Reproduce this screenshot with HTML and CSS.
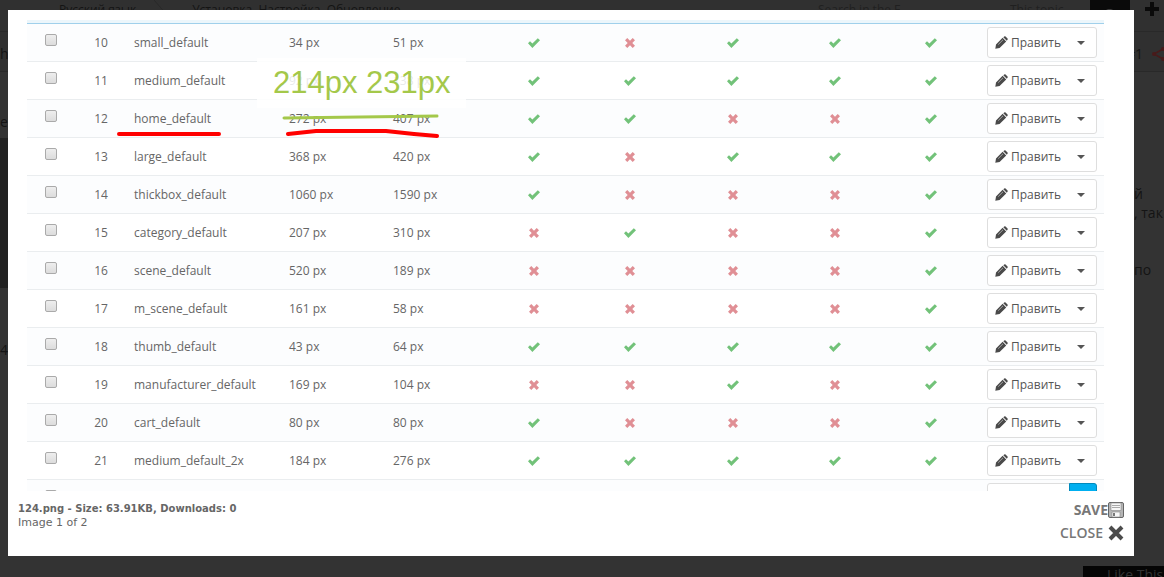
FILE: index.html
```html
<!DOCTYPE html>
<html lang="ru">
<head>
    <meta charset="UTF-8">
    <meta name="viewport" content="width=device-width, initial-scale=1.0">
    <title>124.png</title>
    <link rel="stylesheet" href="styles.css">
</head>
<body>
    <svg class="sprite" aria-hidden="true">
        <symbol id="yes" viewBox="0 0 14 12"><path d="M1 6.2 3 4.2 5.4 6.5 10.8 1.2 13 3.3 5.4 11Z"/></symbol>
        <symbol id="no" viewBox="0 0 12 12"><path d="M3.3 1 6 3.7 8.7 1 11 3.3 8.3 6 11 8.7 8.7 11 6 8.3 3.3 11 1 8.7 3.7 6 1 3.3Z"/></symbol>
        <symbol id="pencil" viewBox="0 0 13 13"><path d="M1 8.4 7.6 1.800 11.200 5.4 4.600 12 .3 12.7ZM8.3 1.2 9.2.4Q9.9-.1 10.6.5L12.5 2.4Q13.1 3.1 12.5 3.8L11.8 4.700Z"/><path d="M3.200 8.6 8 3.800" fill="none" stroke="#fff" stroke-width=".5"/></symbol>
        <symbol id="caret" viewBox="0 0 8 4"><path d="M0 0H8L4 4Z"/></symbol>
    </svg>

    <div class="page">
        <nav class="topbar">
            <a class="crumb" href="#">Русский язык</a>
            <svg class="sep" viewBox="0 0 14 31"><path d="M0 0 13 15 0 31" fill="none" stroke="#292929"/></svg>
            <a class="crumb" href="#">Установка, Настройка, Обновление</a>
            <span class="hint">Search in the F...</span>
            <span class="scope">This topic</span>
            <button class="search" type="button" aria-label="Search"><svg viewBox="0 0 16 16" width="16" height="16"><path d="M11 11 15 15M7.500 2a5 5 0 1 0 .1 0" fill="none" stroke="#444" stroke-width="2"/></svg></button>
            <svg class="plus" viewBox="0 0 14 14"><path d="M5 0H9V5H14V9H9V14H5V9H0V5H5Z"/></svg>
        </nav>
        <div class="postbar">
            <span>h</span>
            <a class="number" href="#">#1</a>
            <svg class="share" viewBox="0 0 14 14"><path d="M11 2 2 7 11 12" fill="none" stroke="#481a1a" stroke-width="1.5"/><g fill="#481a1a"><circle cx="2" cy="7" r="2"/><circle cx="11" cy="2" r="2"/><circle cx="11" cy="12" r="2"/></g></svg>
        </div>
        <div class="post">
            <div class="author">
                <p>es</p>
                <div class="avatar"></div>
                <p>4</p>
            </div>
            <div class="message">
                <p>й<br>, так</p>
                <p>по</p>
            </div>
        </div>
        <button class="like" type="button">Like This</button>
    </div>

    <main class="lightbox">
        <div class="picture">
            <table class="sizes">
                <colgroup>
                    <col class="c-check"><col class="c-id"><col class="c-name"><col class="c-width"><col class="c-height">
                    <col class="c-flag"><col class="c-flag"><col class="c-flag-wide"><col class="c-flag"><col class="c-flag"><col class="c-action">
                </colgroup>
                <tbody>
                    <tr>
                        <td><input type="checkbox" aria-label="small_default"></td><td>10</td><td>small_default</td><td>34 px</td><td>51 px</td>
                        <td><svg class="yes"><use href="#yes"/></svg></td><td><svg class="no"><use href="#no"/></svg></td><td><svg class="yes"><use href="#yes"/></svg></td><td><svg class="yes"><use href="#yes"/></svg></td><td><svg class="yes"><use href="#yes"/></svg></td>
                        <td><div class="group"><button type="button" class="edit"><svg><use href="#pencil"/></svg>Править</button><button type="button" class="more" aria-label="Ещё"><svg><use href="#caret"/></svg></button></div></td>
                    </tr>
                    <tr>
                        <td><input type="checkbox" aria-label="medium_default"></td><td>11</td><td>medium_default</td><td>92 px</td><td>138 px</td>
                        <td><svg class="yes"><use href="#yes"/></svg></td><td><svg class="yes"><use href="#yes"/></svg></td><td><svg class="yes"><use href="#yes"/></svg></td><td><svg class="yes"><use href="#yes"/></svg></td><td><svg class="yes"><use href="#yes"/></svg></td>
                        <td><div class="group"><button type="button" class="edit"><svg><use href="#pencil"/></svg>Править</button><button type="button" class="more" aria-label="Ещё"><svg><use href="#caret"/></svg></button></div></td>
                    </tr>
                    <tr>
                        <td><input type="checkbox" aria-label="home_default"></td><td>12</td><td>home_default</td><td>272 px</td><td>407 px</td>
                        <td><svg class="yes"><use href="#yes"/></svg></td><td><svg class="yes"><use href="#yes"/></svg></td><td><svg class="no"><use href="#no"/></svg></td><td><svg class="no"><use href="#no"/></svg></td><td><svg class="yes"><use href="#yes"/></svg></td>
                        <td><div class="group"><button type="button" class="edit"><svg><use href="#pencil"/></svg>Править</button><button type="button" class="more" aria-label="Ещё"><svg><use href="#caret"/></svg></button></div></td>
                    </tr>
                    <tr>
                        <td><input type="checkbox" aria-label="large_default"></td><td>13</td><td>large_default</td><td>368 px</td><td>420 px</td>
                        <td><svg class="yes"><use href="#yes"/></svg></td><td><svg class="no"><use href="#no"/></svg></td><td><svg class="yes"><use href="#yes"/></svg></td><td><svg class="yes"><use href="#yes"/></svg></td><td><svg class="yes"><use href="#yes"/></svg></td>
                        <td><div class="group"><button type="button" class="edit"><svg><use href="#pencil"/></svg>Править</button><button type="button" class="more" aria-label="Ещё"><svg><use href="#caret"/></svg></button></div></td>
                    </tr>
                    <tr>
                        <td><input type="checkbox" aria-label="thickbox_default"></td><td>14</td><td>thickbox_default</td><td>1060 px</td><td>1590 px</td>
                        <td><svg class="yes"><use href="#yes"/></svg></td><td><svg class="no"><use href="#no"/></svg></td><td><svg class="no"><use href="#no"/></svg></td><td><svg class="no"><use href="#no"/></svg></td><td><svg class="yes"><use href="#yes"/></svg></td>
                        <td><div class="group"><button type="button" class="edit"><svg><use href="#pencil"/></svg>Править</button><button type="button" class="more" aria-label="Ещё"><svg><use href="#caret"/></svg></button></div></td>
                    </tr>
                    <tr>
                        <td><input type="checkbox" aria-label="category_default"></td><td>15</td><td>category_default</td><td>207 px</td><td>310 px</td>
                        <td><svg class="no"><use href="#no"/></svg></td><td><svg class="yes"><use href="#yes"/></svg></td><td><svg class="no"><use href="#no"/></svg></td><td><svg class="no"><use href="#no"/></svg></td><td><svg class="yes"><use href="#yes"/></svg></td>
                        <td><div class="group"><button type="button" class="edit"><svg><use href="#pencil"/></svg>Править</button><button type="button" class="more" aria-label="Ещё"><svg><use href="#caret"/></svg></button></div></td>
                    </tr>
                    <tr>
                        <td><input type="checkbox" aria-label="scene_default"></td><td>16</td><td>scene_default</td><td>520 px</td><td>189 px</td>
                        <td><svg class="no"><use href="#no"/></svg></td><td><svg class="no"><use href="#no"/></svg></td><td><svg class="no"><use href="#no"/></svg></td><td><svg class="no"><use href="#no"/></svg></td><td><svg class="yes"><use href="#yes"/></svg></td>
                        <td><div class="group"><button type="button" class="edit"><svg><use href="#pencil"/></svg>Править</button><button type="button" class="more" aria-label="Ещё"><svg><use href="#caret"/></svg></button></div></td>
                    </tr>
                    <tr>
                        <td><input type="checkbox" aria-label="m_scene_default"></td><td>17</td><td>m_scene_default</td><td>161 px</td><td>58 px</td>
                        <td><svg class="no"><use href="#no"/></svg></td><td><svg class="no"><use href="#no"/></svg></td><td><svg class="no"><use href="#no"/></svg></td><td><svg class="no"><use href="#no"/></svg></td><td><svg class="yes"><use href="#yes"/></svg></td>
                        <td><div class="group"><button type="button" class="edit"><svg><use href="#pencil"/></svg>Править</button><button type="button" class="more" aria-label="Ещё"><svg><use href="#caret"/></svg></button></div></td>
                    </tr>
                    <tr>
                        <td><input type="checkbox" aria-label="thumb_default"></td><td>18</td><td>thumb_default</td><td>43 px</td><td>64 px</td>
                        <td><svg class="yes"><use href="#yes"/></svg></td><td><svg class="yes"><use href="#yes"/></svg></td><td><svg class="yes"><use href="#yes"/></svg></td><td><svg class="yes"><use href="#yes"/></svg></td><td><svg class="yes"><use href="#yes"/></svg></td>
                        <td><div class="group"><button type="button" class="edit"><svg><use href="#pencil"/></svg>Править</button><button type="button" class="more" aria-label="Ещё"><svg><use href="#caret"/></svg></button></div></td>
                    </tr>
                    <tr>
                        <td><input type="checkbox" aria-label="manufacturer_default"></td><td>19</td><td>manufacturer_default</td><td>169 px</td><td>104 px</td>
                        <td><svg class="no"><use href="#no"/></svg></td><td><svg class="no"><use href="#no"/></svg></td><td><svg class="yes"><use href="#yes"/></svg></td><td><svg class="no"><use href="#no"/></svg></td><td><svg class="yes"><use href="#yes"/></svg></td>
                        <td><div class="group"><button type="button" class="edit"><svg><use href="#pencil"/></svg>Править</button><button type="button" class="more" aria-label="Ещё"><svg><use href="#caret"/></svg></button></div></td>
                    </tr>
                    <tr>
                        <td><input type="checkbox" aria-label="cart_default"></td><td>20</td><td>cart_default</td><td>80 px</td><td>80 px</td>
                        <td><svg class="yes"><use href="#yes"/></svg></td><td><svg class="no"><use href="#no"/></svg></td><td><svg class="no"><use href="#no"/></svg></td><td><svg class="no"><use href="#no"/></svg></td><td><svg class="yes"><use href="#yes"/></svg></td>
                        <td><div class="group"><button type="button" class="edit"><svg><use href="#pencil"/></svg>Править</button><button type="button" class="more" aria-label="Ещё"><svg><use href="#caret"/></svg></button></div></td>
                    </tr>
                    <tr>
                        <td><input type="checkbox" aria-label="medium_default_2x"></td><td>21</td><td>medium_default_2x</td><td>184 px</td><td>276 px</td>
                        <td><svg class="yes"><use href="#yes"/></svg></td><td><svg class="yes"><use href="#yes"/></svg></td><td><svg class="yes"><use href="#yes"/></svg></td><td><svg class="yes"><use href="#yes"/></svg></td><td><svg class="yes"><use href="#yes"/></svg></td>
                        <td><div class="group"><button type="button" class="edit"><svg><use href="#pencil"/></svg>Править</button><button type="button" class="more" aria-label="Ещё"><svg><use href="#caret"/></svg></button></div></td>
                    </tr>
                    <tr class="hovered">
                        <td><input type="checkbox" aria-label="next"></td><td></td><td></td><td></td><td></td><td></td><td></td><td></td><td></td><td></td>
                        <td><div class="group"><button type="button" class="edit" aria-label="Править"></button><button type="button" class="more active" aria-label="Ещё"></button></div></td>
                    </tr>
                </tbody>
            </table>
            <!-- hand-drawn marks over the table -->
            <div class="note">214px 231px</div>
            <svg class="marks" viewBox="0 0 340 40" fill="none" stroke-linecap="round" stroke-linejoin="round">
                <path d="M176 8 329 6" stroke="#a4c84a" stroke-width="3"/>
                <path d="M11 24H111M180 24 208 21H278L306 24 329 26" stroke="#f00" stroke-width="4"/>
            </svg>
        </div>
        <div class="details">
            <div class="caption">
                <strong>124.png - Size: 63.91KB, Downloads: 0</strong>
                <span>Image 1 of 2</span>
            </div>
            <div class="actions">
                <a class="save" href="#">SAVE
                    <svg viewBox="0 0 16 16"><path d="M.5 2Q.5.5 2 .5H14Q15.5.5 15.5 2V14Q15.5 15.5 14 15.5H2Q.5 15.5.5 14Z" fill="#b5b5b5" stroke="#666"/><path d="M3 1H13V8.500H3ZM4 10H12V15H4Z" fill="#f7f7f7" stroke="#888" stroke-width=".6"/><path d="M4 3.500H12M4 5.500H12" stroke="#aaa"/><path d="M5 11H7V14H5Z" fill="#777"/></svg>
                </a>
                <a class="close" href="#">CLOSE
                    <svg viewBox="0 0 16 16"><path d="M2 2 14 14M14 2 2 14" stroke="#4c4c4c" stroke-width="4"/></svg>
                </a>
            </div>
        </div>
    </main>
</body>
</html>
```

FILE: styles.css
```css
* {
    box-sizing: border-box;
}
body {
    margin: 0;
    background-color: #333;
    font-family: "Open Sans", sans-serif;
}
a {
    color: inherit;
    text-decoration: none;
}
button {
    font-family: inherit;
    cursor: pointer;
}
p {
    margin: 0;
}
.sprite {
    display: none;
}

/* dimmed forum page */
.page {
    display: flex;
    flex-direction: column;
    height: 100vh;
    overflow: hidden;
    color: #141414;
    font-size: 14px;
}
.topbar {
    display: flex;
    height: 32px;
    padding-left: 59px;
    background-color: #303030;
    border-bottom: 1px solid #292929;
    font-size: 12px;
    line-height: 20px;
}
.sep {
    width: 14px;
    height: 31px;
    margin: 0 24px 0 18px;
}
.hint {
    width: 192px;
    margin-left: auto;
    color: #202020;
}
.scope {
    width: 80px;
    color: #202020;
}
.search {
    width: 40px;
    padding: 3px 0;
    background-color: #0a0a0a;
    border: none;
    line-height: 0;
}
.search svg {
    display: block;
    margin: 0 auto auto;
}
.plus {
    width: 14px;
    height: 14px;
    margin: 2px 5px 0 15px;
    fill: #0a0a0a;
}
.postbar {
    display: flex;
    align-items: center;
    height: 40px;
    padding-top: 4px;
    background-color: #303030;
    border-bottom: 1px solid #292929;
}
.number {
    margin-left: auto;
}
.share {
    width: 14px;
    height: 14px;
    margin: 0 -2px 0 9px;
}
.post {
    display: flex;
    justify-content: space-between;
}
.author {
    padding-top: 40px;
    line-height: 20px;
}
.avatar {
    width: 60px;
    height: 150px;
    margin: 6px 0 52px;
    background-color: #222;
}
.message {
    width: 30px;
    padding-top: 112px;
    line-height: 19px;
    white-space: nowrap;
}
.message p {
    margin-bottom: 38px;
}
.like {
    align-self: flex-end;
    flex: none;
    width: 81px;
    height: 11px;
    margin-top: auto;
    padding: 0 0 0 24px;
    overflow: hidden;
    background-color: #050505;
    border: none;
    color: #333;
    font-size: 14px;
    line-height: 17px;
    text-align: left;
    white-space: nowrap;
}

/* lightbox */
.lightbox {
    position: absolute;
    top: 10px;
    right: 30px;
    left: 8px;
    padding: 10px 10px 13px;
    background-color: #fff;
}
.picture {
    position: relative;
    height: 471px;
    margin: 0 20px 0 9px;
    overflow: hidden;
    border-top: 3px solid #ecf6fb;
}
.sizes {
    width: 100%;
    table-layout: fixed;
    border-collapse: separate;
    border-spacing: 0;
    border-top: 1px solid #a0d0eb;
    color: #666;
    font-size: 12px;
}
.c-check { width: 47px; }
.c-id { width: 54px; }
.c-name { width: 155px; }
.c-width { width: 104px; }
.c-height { width: 99px; }
.c-flag { width: 96px; }
.c-flag-wide { width: 109px; }
.sizes td {
    height: 38px;
    padding: 0 6px;
    border-bottom: 1px solid #eaedef;
    white-space: nowrap;
}
.sizes tr:nth-child(odd) {
    background-color: #fcfdfe;
}
.sizes .hovered {
    background-color: #f3f7fa;
}
.sizes td:nth-child(1),
.sizes td:nth-child(2),
.sizes td:nth-child(n+6) {
    text-align: center;
}
.sizes td:nth-child(n+6) {
    padding: 0;
}
.sizes input {
    appearance: none;
    display: block;
    width: 12px;
    height: 12px;
    margin: 0 auto 5px;
    background: linear-gradient(#eee, #dcdcdc);
    border: 1px solid #aaa;
    border-radius: 2px;
}
.yes {
    display: block;
    width: 14px;
    height: 12px;
    margin: 0 auto;
    fill: #72c279;
}
.no {
    display: block;
    width: 12px;
    height: 12px;
    margin: 0 auto;
    fill: #e08f95;
}
.group {
    display: flex;
    width: 110px;
    height: 31px;
    margin-left: auto;
    margin-right: 7px;
    background-color: #fff;
    border: 1px solid #dedede;
    border-radius: 3px;
}
.group button {
    display: flex;
    align-items: center;
    padding: 0;
    background: none;
    border: none;
    color: #555;
    font-size: 12px;
}
.edit {
    flex: 1;
    gap: 3px;
}
.group .edit {
    padding-left: 7px;
}
.edit svg {
    width: 13px;
    height: 13px;
    fill: #4a4a4a;
}
.more {
    justify-content: center;
    width: 30px;
}
.more svg {
    width: 8px;
    height: 4px;
    fill: #555;
}
.group .active {
    width: 28px;
    margin: -1px -1px 0 0;
    background-color: #00aff0;
    border: 1px solid #008abd;
    border-radius: 0 3px 3px 0;
}
.note {
    position: absolute;
    top: 35px;
    left: 230px;
    padding: 6px 15px 6px 16px;
    background-color: rgba(255, 255, 255, 0.85);
    color: #a4c84a;
    font-family: "Liberation Sans", Arial, sans-serif;
    font-size: 31px;
    line-height: 38px;
    white-space: nowrap;
}
.marks {
    position: absolute;
    top: 87px;
    left: 81px;
    width: 340px;
    height: 40px;
}
.details {
    display: flex;
    justify-content: space-between;
    padding-top: 9px;
    color: #666;
}
.caption {
    display: flex;
    flex-direction: column;
    padding-top: 2px;
    font-family: Verdana, "DejaVu Sans", sans-serif;
    font-size: 11px;
    line-height: 14px;
}
.caption strong {
    font-size: 10px;
}
.actions {
    display: flex;
    flex-direction: column;
    align-items: flex-end;
    gap: 3px;
    color: #777;
    font-size: 14px;
    line-height: 20px;
}
.actions a {
    display: flex;
    align-items: center;
}
.actions svg {
    width: 16px;
    height: 16px;
}
.save {
    font-weight: bold;
}
.close {
    gap: 5px;
    font-weight: 600;
}
```
